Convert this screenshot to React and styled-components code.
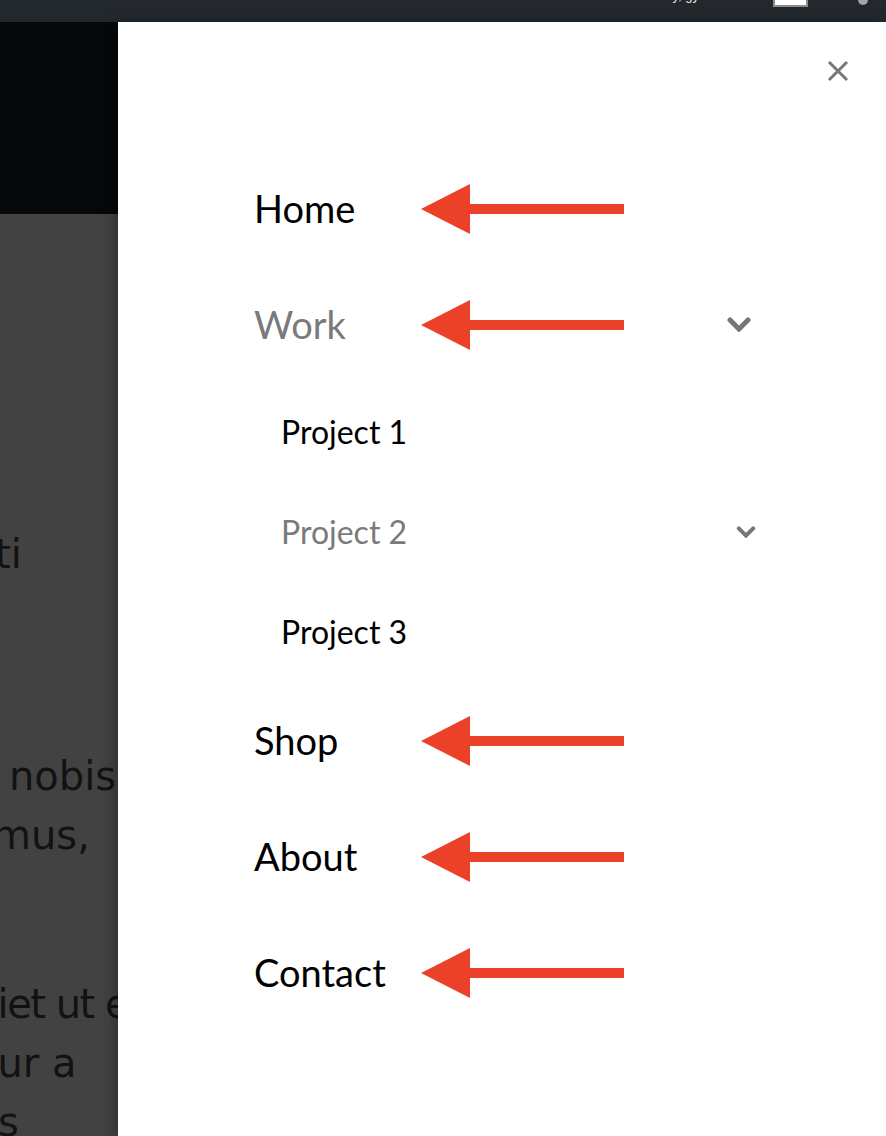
import React from "react";
import styled, { createGlobalStyle } from "styled-components";

const GlobalStyle = createGlobalStyle`
  * {
    box-sizing: border-box;
  }
  body {
    margin: 0;
    background: #424242;
    font-family: "Lato", "Liberation Sans", sans-serif;
  }
`;

const Page = styled.div`
  display: flex;
  flex-direction: column;
  height: 1136px;
  overflow: hidden;
`;

const AdminBar = styled.div`
  height: 22px;
  flex: none;
  background: #23282d;
  overflow: hidden;
  display: flex;
  justify-content: flex-end;
  align-items: flex-start;
  padding-right: 18px;
`;

const Howdy = styled.span`
  margin-top: -12px;
  font-family: "Liberation Sans", sans-serif;
  font-size: 13px;
  line-height: 16px;
  color: #eeeeee;
  margin-right: 74px;
`;

const Avatar = styled.span`
  display: block;
  width: 35px;
  height: 8px;
  margin-top: -1px;
  background: #ffffff;
  border: 2px solid #8a8c8e;
  border-top: none;
  margin-right: 50px;
`;

const SearchDot = styled.span`
  display: block;
  width: 10px;
  height: 10px;
  margin-top: -5px;
  border-radius: 50%;
  background: #a0a5aa;
`;

const Body = styled.div`
  flex: 1;
  display: flex;
  min-height: 0;
`;

const Backdrop = styled.div`
  width: 118px;
  flex: none;
  display: flex;
  flex-direction: column;
  overflow: hidden;
  background: #424242;
`;

const DarkHeader = styled.div`
  height: 192px;
  flex: none;
  background: #06090c;
`;

const Paragraph = styled.div`
  margin-top: ${(p) => p.$gap}px;
  font-family: "DejaVu Sans", sans-serif;
  font-size: 40px;
  line-height: 59px;
  color: #121212;
  white-space: nowrap;
`;

const Line = styled.div`
  margin-left: ${(p) => p.$shift}px;
  letter-spacing: ${(p) => p.$tight || 0}px;
`;

const Panel = styled.aside`
  flex: 1;
  background: #ffffff;
  display: flex;
  flex-direction: column;
  box-shadow: -4px 0 12px rgba(0, 0, 0, 0.25);
`;

const CloseRow = styled.div`
  display: flex;
  justify-content: flex-end;
  padding: 38px 37px 0 0;
`;

const CloseButton = styled.button`
  border: none;
  background: none;
  padding: 0;
  width: 22px;
  height: 22px;
  display: flex;
`;

const Menu = styled.ul`
  list-style: none;
  margin: 68px 0 0;
  padding: 0 135px 0 136px;
`;

const Row = styled.li`
  display: grid;
  grid-template-columns: ${(p) => (p.$sub ? "140px" : "167px")} 203px 1fr auto;
  align-items: center;
  padding: ${(p) => (p.$sub ? "32px 0" : "35px 0")};
  padding-left: ${(p) => (p.$sub ? "27px" : "0")};
`;

const Label = styled.a`
  font-size: ${(p) => (p.$sub ? "32px" : "38px")};
  line-height: ${(p) => (p.$sub ? "36px" : "46px")};
  color: ${(p) => (p.$muted ? "#7a7a7a" : "#000000")};
  text-decoration: none;
  white-space: nowrap;
`;

const ArrowCell = styled.span`
  display: flex;
  align-items: center;
  height: 0;
  overflow: visible;
  margin-top: 2px;
`;

const Toggle = styled.span`
  display: flex;
  align-items: center;
  margin-right: ${(p) => (p.$sub ? "-5px" : "0")};
`;

function CloseIcon() {
  return (
    <svg width="22" height="22" viewBox="0 0 22 22">
      <path d="M2 2 L20 20 M20 2 L2 20" stroke="#777777" strokeWidth="3" />
    </svg>
  );
}

function Chevron({ size }) {
  const h = Math.round(size * 0.62);
  return (
    <svg width={size} height={h} viewBox="0 0 24 15" style={{ display: "block" }}>
      <path
        d="M3 3 L12 12 L21 3"
        fill="none"
        stroke="#777777"
        strokeWidth="5"
        strokeLinecap="round"
      />
    </svg>
  );
}

function Arrow() {
  return (
    <svg width="203" height="50" viewBox="0 0 203 50" style={{ display: "block", flex: "none" }}>
      <polygon points="0,25 49,0 49,50" fill="#ea4128" />
      <rect x="48" y="20" width="155" height="10" fill="#ea4128" />
    </svg>
  );
}

const items = [
  { label: "Home", arrow: true },
  { label: "Work", arrow: true, muted: true, toggle: true },
  { label: "Project 1", sub: true },
  { label: "Project 2", sub: true, muted: true, toggle: true },
  { label: "Project 3", sub: true },
  { label: "Shop", arrow: true },
  { label: "About", arrow: true },
  { label: "Contact", arrow: true },
];

export default function App() {
  return (
    <>
      <GlobalStyle />
      <Page>
        <AdminBar>
          <Howdy>Howdy, gy</Howdy>
          <Avatar />
          <SearchDot />
        </AdminBar>
        <Body>
          <Backdrop>
            <DarkHeader />
            <Paragraph $gap={311}>
              <Line $shift={-5}>ti</Line>
            </Paragraph>
            <Paragraph $gap={163}>
              <Line $shift={9}>nobis</Line>
              <Line $shift={-8}>mus,</Line>
            </Paragraph>
            <Paragraph $gap={110}>
              <Line $shift={-12} $tight={-1.5}>liet ut et</Line>
              <Line $shift={-27}>our a</Line>
              <Line $shift={-2}>s</Line>
            </Paragraph>
          </Backdrop>
          <Panel>
            <CloseRow>
              <CloseButton aria-label="Close menu">
                <CloseIcon />
              </CloseButton>
            </CloseRow>
            <Menu>
              {items.map((item) => (
                <Row key={item.label} $sub={item.sub}>
                  <Label href="#" $sub={item.sub} $muted={item.muted}>
                    {item.label}
                  </Label>
                  <ArrowCell>{item.arrow && <Arrow />}</ArrowCell>
                  <span />
                  <Toggle $sub={item.sub}>
                    {item.toggle && <Chevron size={item.sub ? 20 : 24} />}
                  </Toggle>
                </Row>
              ))}
            </Menu>
          </Panel>
        </Body>
      </Page>
    </>
  );
}
